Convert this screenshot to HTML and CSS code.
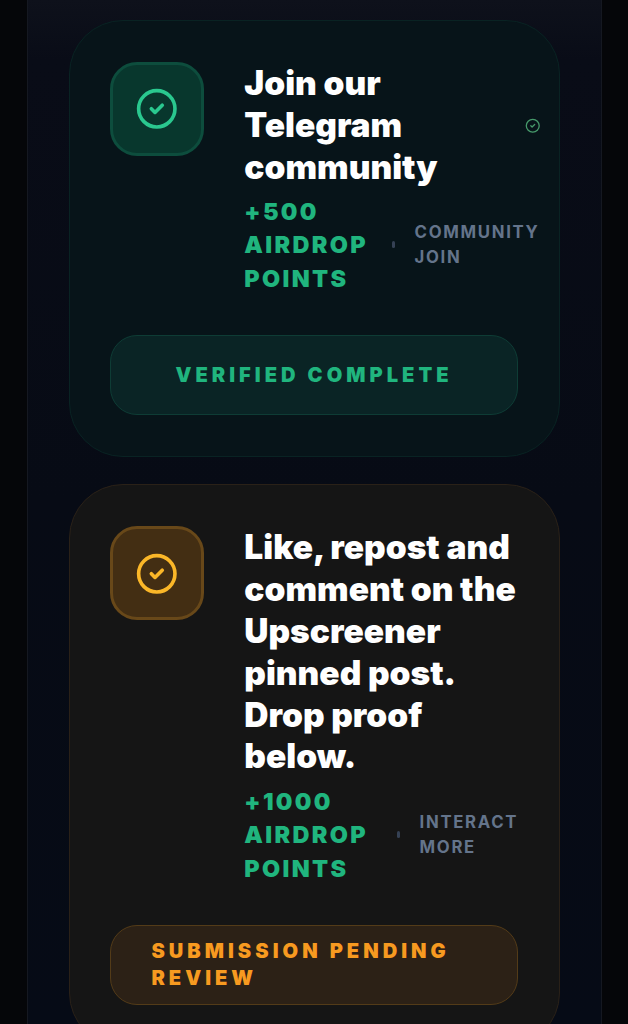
FILE: index.html
```html
<!DOCTYPE html>
<html lang="en">
<head>
  <meta charset="UTF-8">
  <meta name="viewport" content="width=device-width, initial-scale=1.0">
  <title>Airdrop Tasks</title>
  <link rel="stylesheet" href="styles.css">
</head>
<body>
  <main class="panel">
    <!-- Completed task -->
    <section class="task task-done">
      <div class="task-top">
        <div class="task-icon">
          <svg viewBox="0 0 24 24"><circle cx="12" cy="12" r="10"/><path d="m9 12 2 2 4-4"/></svg>
        </div>
        <div class="task-info">
          <div class="title-row">
            <h2>Join our Telegram community</h2>
            <svg class="mini-check" viewBox="0 0 24 24"><circle cx="12" cy="12" r="10"/><path d="m9 12 2 2 4-4"/></svg>
          </div>
          <div class="meta">
            <span class="points">+500 Airdrop Points</span>
            <span class="dot"></span>
            <span class="tag">Community Join</span>
          </div>
        </div>
      </div>
      <div class="status"><span>Verified Complete</span></div>
    </section>

    <!-- Task waiting for review -->
    <section class="task task-pending">
      <div class="task-top">
        <div class="task-icon">
          <svg viewBox="0 0 24 24"><circle cx="12" cy="12" r="10"/><path d="m9 12 2 2 4-4"/></svg>
        </div>
        <div class="task-info">
          <div class="title-row">
            <h2>Like, repost and comment on the Upscreener pinned post. Drop proof below.</h2>
          </div>
          <div class="meta">
            <span class="points">+1000 Airdrop Points</span>
            <span class="dot"></span>
            <span class="tag">Interact More</span>
          </div>
        </div>
      </div>
      <div class="status"><span>Submission Pending Review</span></div>
    </section>
  </main>
</body>
</html>
```

FILE: styles.css
```css
* {
  box-sizing: border-box;
}
body {
  margin: 0;
  height: 1024px;
  overflow: hidden;
  background: #050609;
  font-family: Inter, "Liberation Sans", sans-serif;
}
.panel {
  width: 575px;
  height: 1024px;
  overflow: hidden;
  margin-left: 26.5px;
  padding: 20.2px 41px;
  display: flex;
  flex-direction: column;
  gap: 27px;
  border: solid #151821;
  border-width: 0 1.6px;
  background: linear-gradient(#0e111b 0, #090c17 60px, #070b15 500px, #060b16 1024px);
}
.task {
  flex: none;
  padding: 41px 40.4px;
  border: 1.5px solid;
  border-radius: 54px;
}
.task-done {
  color: #2ac88f;
  background: #071419;
  border-color: #092323;
}
.task-pending {
  color: #fbb728;
  background: #151515;
  border-color: #2a2118;
}
.task-top {
  display: flex;
  gap: 40.4px;
}
.task-icon {
  flex: none;
  width: 94px;
  height: 94px;
  display: flex;
  align-items: center;
  justify-content: center;
  border: 3px solid;
  border-radius: 27px;
}
.task-done .task-icon {
  background: #08372d;
  border-color: #0d4d3d;
}
.task-pending .task-icon {
  background: #432e13;
  border-color: #684819;
}
svg {
  fill: none;
  stroke: currentColor;
  stroke-width: 2;
  stroke-linecap: round;
  stroke-linejoin: round;
}
.task-icon svg {
  width: 43.6px;
  height: 43.6px;
}
.task-info {
  flex: none;
  width: 274px;
}
.task-done .task-info {
  width: 296px;
}
.title-row {
  display: flex;
  align-items: center;
  justify-content: space-between;
}
h2 {
  margin: 0;
  padding-top: 0.5px;
  color: #fff;
  font-size: 33.5px;
  line-height: 41.9px;
  font-weight: 900;
}
.task-done h2 {
  width: 230px;
}
.mini-check {
  width: 15.5px;
  height: 15.5px;
  color: #469a6b;
}
.meta {
  display: flex;
  align-items: center;
  margin-top: 6.3px;
  text-transform: uppercase;
}
.points {
  flex: none;
  width: 147.3px;
  color: #20b57e;
  font-size: 23.45px;
  line-height: 33.5px;
  font-weight: 900;
  letter-spacing: 0.1em;
}
.dot {
  flex: none;
  width: 3px;
  height: 7px;
  margin-right: 20px;
  border-radius: 1.5px;
  background: #354154;
}
.task-pending .points {
  width: 152.3px;
}
.tag {
  color: #64748b;
  font-size: 16.75px;
  line-height: 25.1px;
  font-weight: 700;
  letter-spacing: 0.1em;
}
.status {
  height: 80.5px;
  margin-top: 39.7px;
  padding: 0 40.5px;
  display: flex;
  align-items: center;
  justify-content: center;
  border: 1.5px solid;
  border-radius: 27px;
  font-size: 20.1px;
  line-height: 26.8px;
  font-weight: 900;
  letter-spacing: 0.2em;
  text-transform: uppercase;
}
.task-done .status {
  color: #20b57e;
  background: #0a2425;
  border-color: #0e3c35;
}
.task-pending .status {
  color: #f79a20;
  background: #2c2116;
  border-color: #533b18;
}
```
